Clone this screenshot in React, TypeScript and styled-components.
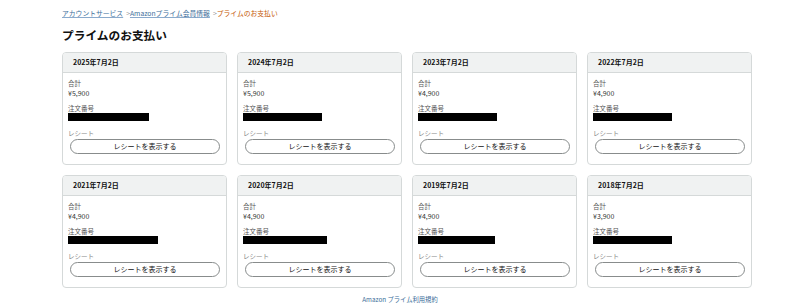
import React from "react";
import styled, { createGlobalStyle } from "styled-components";

const Global = createGlobalStyle`
  html, body { margin: 0; padding: 0; background: #fff; }
  body { font-family: "Noto Sans CJK JP", "Noto Sans", "Liberation Sans", sans-serif; color: #111; }
`;

const Page = styled.div`
  width: 800px;
  height: 306px;
  overflow: hidden;
  padding: 8px 0 0 62px;
  box-sizing: border-box;
`;

const Breadcrumb = styled.div`
  font-size: 6.8px;
  line-height: 10px;
  height: 10px;
  color: #555;
  white-space: nowrap;
`;

const Crumb = styled.a<{ $current?: boolean }>`
  color: ${(p) => (p.$current ? "#c45500" : "#3a6d99")};
  text-decoration: ${(p) => (p.$current ? "none" : "underline")};
  text-decoration-color: #8aaacc;
`;

const Sep = styled.span`
  color: #888;
  margin: 0 0 0 3px;
`;

const Title = styled.h1`
  margin: 9px 0 0 0;
  font-size: 11.7px;
  line-height: 16px;
  font-weight: 700;
  color: #111;
`;

const Grid = styled.div`
  display: grid;
  grid-template-columns: repeat(4, 165px);
  column-gap: 10px;
  row-gap: 10px;
  margin-top: 9px;
`;

const Card = styled.div`
  border: 1px solid #d5d9d9;
  border-radius: 4px;
  height: 113px;
  box-sizing: border-box;
  overflow: hidden;
`;

const CardHeader = styled.div`
  background: #f0f2f2;
  border-bottom: 1px solid #d5d9d9;
  height: 19px;
  padding-left: 10px;
  font-size: 7px;
  font-weight: 700;
  line-height: 19px;
  color: #111;
`;

const CardBody = styled.div`
  padding: 5px 6px 0 5px;
`;

const Label = styled.div<{ $light?: boolean }>`
  font-size: 6.5px;
  line-height: 10px;
  color: ${(p) => (p.$light ? "#888" : "#555")};
`;

const Value = styled.div`
  font-size: 7px;
  line-height: 10px;
  color: #333;
`;

const Section = styled.div<{ $gap: number }>`
  margin-top: ${(p) => p.$gap}px;
`;

const Redacted = styled.div`
  height: 8px;
  background: #000;
`;

const Button = styled.button`
  display: block;
  width: 150px;
  height: 15px;
  margin: 1px 0 0 2px;
  padding: 0;
  border: 1px solid #888c8c;
  border-radius: 8px;
  background: #fff;
  font-family: inherit;
  font-size: 7px;
  line-height: 13px;
  color: #111;
  box-sizing: border-box;
`;

const Footer = styled.div`
  margin: 7px 0 0 -62px;
  width: 800px;
  text-align: center;
  font-size: 6.3px;
  line-height: 10px;
`;

const FooterLink = styled.a`
  color: #3a6d99;
  text-decoration: none;
`;

const payments = [
  { date: "2025年7月2日", amount: "¥5,900", bar: 81 },
  { date: "2024年7月2日", amount: "¥5,900", bar: 79 },
  { date: "2023年7月2日", amount: "¥4,900", bar: 79 },
  { date: "2022年7月2日", amount: "¥4,900", bar: 79 },
  { date: "2021年7月2日", amount: "¥4,900", bar: 90 },
  { date: "2020年7月2日", amount: "¥4,900", bar: 84 },
  { date: "2019年7月2日", amount: "¥4,900", bar: 77 },
  { date: "2018年7月2日", amount: "¥3,900", bar: 79 },
];

export default function App() {
  return (
    <>
      <Global />
      <Page>
        <Breadcrumb>
          <Crumb>アカウントサービス</Crumb>
          <Sep>&gt;</Sep>
          <Crumb>Amazonプライム会員情報</Crumb>
          <Sep>&gt;</Sep>
          <Crumb $current>プライムのお支払い</Crumb>
        </Breadcrumb>
        <Title>プライムのお支払い</Title>
        <Grid>
          {payments.map((p) => (
            <Card key={p.date}>
              <CardHeader>{p.date}</CardHeader>
              <CardBody>
                <Label>合計</Label>
                <Value>{p.amount}</Value>
                <Section $gap={5}>
                  <Label>注文番号</Label>
                  <Redacted style={{ width: p.bar }} />
                </Section>
                <Section $gap={7}>
                  <Label $light>レシート</Label>
                  <Button>レシートを表示する</Button>
                </Section>
              </CardBody>
            </Card>
          ))}
        </Grid>
        <Footer>
          <FooterLink>Amazon プライム利用規約</FooterLink>
        </Footer>
      </Page>
    </>
  );
}
